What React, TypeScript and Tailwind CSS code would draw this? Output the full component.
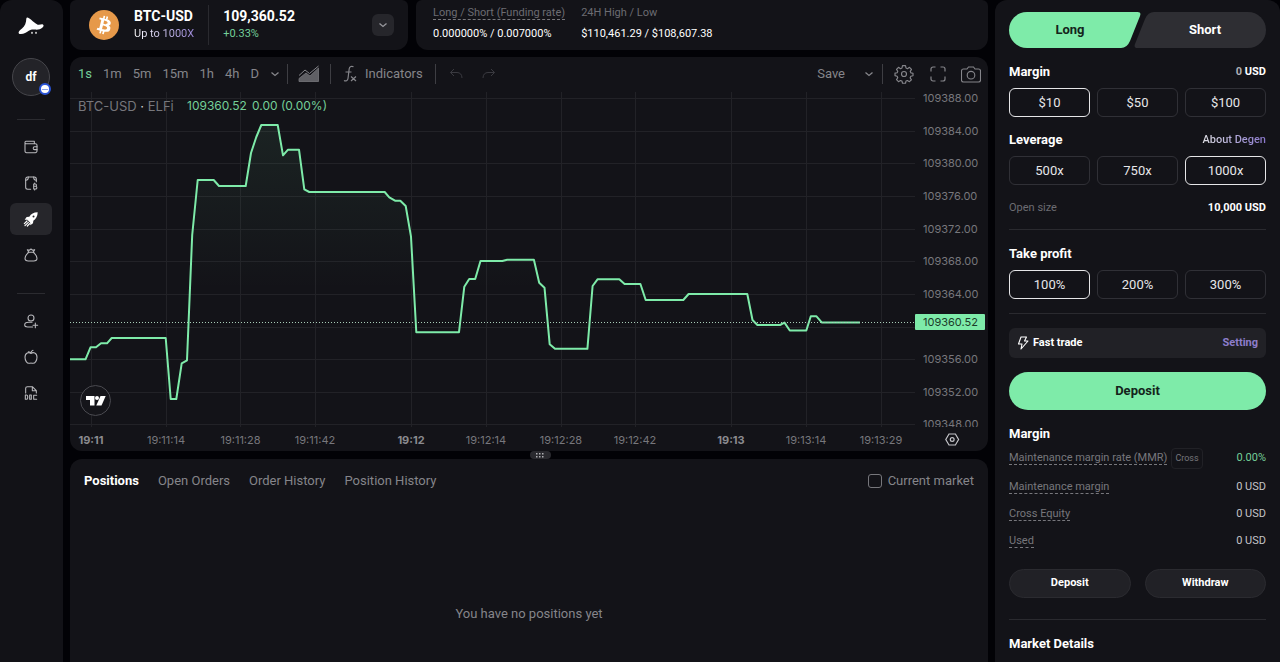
import { useState, type ReactNode } from "react";

const GREEN = "#7eeba9";

const PRICE_LINE =
  "70,359.3 85.5,359.3 90.5,347.3 96,347.3 101,343.3 107,343.3 111.7,338 165.7,338 170.7,399 176.3,399 181.7,363.3 187,360.3 192.2,235 197.7,180 213.7,180 219,186 245.7,186 251,153 256.3,137 261.3,125 277.7,125 283,155.3 288,149.7 299,149.7 304.3,189.3 309.3,192 384.7,192 389.3,197.3 395,200.7 400.3,200.7 405.7,206 411,236.7 416.3,332.2 459,332.2 464.3,286.7 469.2,279 475.2,279 480.5,261 502.3,261 507.2,259.8 533.9,259.8 539.2,282.7 544.5,287.7 549.7,344.3 555,348.8 587.4,348.8 592.6,286 597.5,279.3 619.3,279.3 624.6,284 640.4,284 645.7,300 683.3,300 688.6,294 747.3,294 752.5,320 757.4,325 780,325 784.5,322.6 789.8,330.5 806.3,330.5 810.8,316.3 816.5,316.3 821.7,322.4 860,322.4";

const PRICES = [
  { label: "109388.00", y: 98 },
  { label: "109384.00", y: 131 },
  { label: "109380.00", y: 163 },
  { label: "109376.00", y: 196 },
  { label: "109372.00", y: 229 },
  { label: "109368.00", y: 261 },
  { label: "109364.00", y: 294 },
  { label: "", y: 327 },
  { label: "109356.00", y: 359 },
  { label: "109352.00", y: 392 },
  { label: "109348.00", y: 424 },
];

const TIMES = [
  { label: "19:11", x: 91, major: true },
  { label: "19:11:14", x: 166 },
  { label: "19:11:28", x: 240.5 },
  { label: "19:11:42", x: 315 },
  { label: "19:12", x: 411, major: true },
  { label: "19:12:14", x: 486 },
  { label: "19:12:28", x: 561 },
  { label: "19:12:42", x: 635 },
  { label: "19:13", x: 731, major: true },
  { label: "19:13:14", x: 806 },
  { label: "19:13:29", x: 881 },
];

function Icon({ children, className = "size-4" }: { children: ReactNode; className?: string }) {
  return (
    <svg
      viewBox="0 0 24 24"
      fill="none"
      stroke="currentColor"
      strokeWidth="1.6"
      strokeLinecap="round"
      strokeLinejoin="round"
      className={className}
      aria-hidden="true"
    >
      {children}
    </svg>
  );
}

const Chevron = () => (
  <svg viewBox="0 0 10 10" fill="none" stroke="currentColor" strokeWidth="1.3" className="size-[10px]" aria-hidden="true">
    <path d="M1.5 3.5 5 6.5l3.5-3" />
  </svg>
);

const NAV_TOP = [
  {
    name: "Wallet",
    icon: (
      <Icon>
        <path d="M3 5.500v12A2.500 2.500 0 0 0 5.500 20.500h13a2.500 2.500 0 0 0 2.500-2.500v-8.500A2.500 2.500 0 0 0 18.500 7H4.500A1.500 1.500 0 0 1 3 5.500 1.500 1.500 0 0 1 4.500 3.500H17V7" />
        <path d="M21 11.500h-3.500a2.200 2.200 0 0 0 0 4.400H21" />
      </Icon>
    ),
  },
  {
    name: "Crypto",
    icon: (
      <Icon>
        <path d="M11.500 21.500H7a3 3 0 0 1-3-3V6.500C4 4.500 5.200 3 7 3h10c1.800 0 3 1.500 3 3.500v3.500" />
        <path d="M4 8c2.500 0 4-1.700 4-5M16 3c0 3 1.500 5 4 5" />
        <path d="M16 13.500v7.500h2.800a2 2 0 0 0 0-4H16m2.500 0a1.750 1.750 0 0 0 0-3.500H16M17.500 12v1.500M17.500 21v1.500" />
      </Icon>
    ),
  },
  {
    name: "Degen",
    icon: (
      <svg viewBox="0 0 24 24" fill="currentColor" className="size-4" aria-hidden="true">
        <path
          fillRule="evenodd"
          d="M22 2c-6 0-10 2.500-12.500 6.500L5.500 9 2.500 13l4 .3 4.200 4.200.3 4 4-3 .5-4C19.500 12 22 8 22 2Zm-6.200 4.700a1.500 1.500 0 1 1 0 3 1.500 1.500 0 0 1 0-3Z"
        />
        <path d="M6 15 2 19M8 17l-5 5M10 19l-3.500 3.500" stroke="currentColor" strokeWidth="1.800" strokeLinecap="round" />
      </svg>
    ),
  },
  {
    name: "Earn",
    icon: (
      <Icon>
        <path d="M8.500 8C5 11 3 14 3 17c0 2.500 2 4 5 4h8c3 0 5-1.500 5-4 0-3-2-6-5.500-9" />
        <path d="M7.500 8h9M8.500 7.500 6.500 4 9.500 4.800 12 3l2.500 1.800 3-.8-2 3.500" />
      </Icon>
    ),
  },
];

const NAV_BOTTOM = [
  {
    name: "Referral",
    icon: (
      <Icon>
        <circle cx="12" cy="7.500" r="4.500" />
        <path d="M13.500 14H8.500C5 14 2.500 15.500 2.500 18S4.500 21 7 21h7.500M18.500 15v7M15 18.500h7" />
      </Icon>
    ),
  },
  {
    name: "Farm",
    icon: (
      <Icon>
        <path d="M12 6.500C9 4.500 3 5 3 12.500c0 5 3 9 6 9 1.500 0 2-.5 3-.5s1.500.5 3 .5c3 0 6-4 6-9C21 5 15 4.500 12 6.500Z" />
        <path d="M12 6.500C12 4 13 2.500 15 2M8 4c2 0 3.500.8 4 2.500" />
      </Icon>
    ),
  },
  {
    name: "Docs",
    icon: (
      <Icon>
        <path d="M4 12V5a2.500 2.500 0 0 1 2.500-2.500H14L20 8.500V12M14 2.500v6h6" />
        <path d="M3.500 15v6.500h1.500a2 2 0 0 0 2-2v-2.500a2 2 0 0 0-2-2ZM10 15h2.500v6.500H10ZM20.500 15.500h-4.500V21.500h4.500" />
      </Icon>
    ),
  },
];

function NavButton({ name, icon, active = false }: { name: string; icon: ReactNode; active?: boolean }) {
  return (
    <button
      type="button"
      aria-label={name}
      className={`flex h-8 w-[42px] items-center justify-center rounded-md ${
        active ? "bg-[#26262b] text-white" : "text-[#b9b9bd]"
      }`}
    >
      {icon}
    </button>
  );
}

function Sidebar() {
  return (
    <nav className="flex w-[63px] shrink-0 flex-col items-center rounded-t-xl bg-[#121217] pt-4 pr-px">
      <a href="#home" aria-label="Home" className="flex h-5 items-center">
        <svg viewBox="0 0 26 18" className="h-[18px] w-[26px]" fill="#fff" aria-hidden="true">
          <path d="M11 1.200C9.500.2 8.400.5 8.300 1.700 8.200 5.500 7 9 4 11.500 2.200 13 .8 14 .6 15.500c-.1 1.300 1 1.700 2.300 1.600C6 17 8.300 15.800 10.800 13.800c1.900-1.400 4.200-1.600 6.200-1.200 2.500.5 5.500-.3 7.500-2.100 1.200-1.100 1.500-2.600.3-3.100-1-.4-2.300.3-4 .4C18.500 7.900 14 3.200 11 1.200Z" />
          <path d="m13 16 1-1.500L15 16l-1 1Zm4 0 1-1.500L19 16l-1 1Z" />
        </svg>
      </a>
      <button
        type="button"
        className="relative mt-[22px] flex size-[38px] items-center justify-center rounded-full border border-[#46464b] bg-[#232328] text-xs font-bold text-white"
      >
        df
        <span className="absolute -right-[2px] bottom-0 flex size-3 items-center justify-center rounded-full border-2 border-[#2a54d6] bg-white">
          <span className="h-px w-1.5 bg-[#8ea5ea]" />
        </span>
      </button>
      <hr className="mt-[23px] w-7 border-[#2b2b30]" />
      <div className="mt-[11px] flex flex-col gap-1">
        {NAV_TOP.map((n) => (
          <NavButton key={n.name} {...n} active={n.name === "Degen"} />
        ))}
      </div>
      <hr className="mt-[22px] w-7 border-[#2b2b30]" />
      <div className="mt-[11px] flex flex-col gap-1">
        {NAV_BOTTOM.map((n) => (
          <NavButton key={n.name} {...n} />
        ))}
      </div>
    </nav>
  );
}

function Header() {
  return (
    <header className="flex h-[50px] gap-2">
      <section className="flex w-[338px] shrink-0 items-center rounded-t-md rounded-b-xl bg-[#131318] pl-[19px] pr-[14px]">
        <svg viewBox="0 0 32 32" className="size-[30px]" aria-hidden="true">
          <circle cx="16" cy="16" r="16" fill="#e6994a" />
          <path
            fill="#fff"
            d="M23.189 14.020c.314-2.096-1.283-3.223-3.465-3.975l.708-2.840-1.728-.43-.69 2.765c-.454-.114-.92-.22-1.385-.326l.695-2.783L15.596 6l-.708 2.839c-.376-.086-.746-.17-1.104-.26l.002-.009-2.384-.595-.46 1.846s1.283.294 1.256.312c.7.175.826.638.805 1.006l-.806 3.235c.048.012.110.030.180.057l-.183-.045-1.130 4.532c-.086.212-.303.531-.793.410.018.025-1.256-.313-1.256-.313l-.858 1.978 2.250.561c.418.105.828.215 1.231.318l-.715 2.872 1.727.430.708-2.840c.472.127.930.245 1.378.357l-.706 2.828 1.728.430.715-2.866c2.948.558 5.164.333 6.097-2.333.752-2.146-.037-3.385-1.588-4.192 1.130-.260 1.980-1.003 2.207-2.538zm-3.950 5.538c-.533 2.147-4.148.986-5.320.695l.950-3.805c1.172.293 4.929.872 4.370 3.110zm.535-5.569c-.487 1.953-3.495.960-4.470.717l.860-3.450c.975.243 4.118.696 3.610 2.733z"
          />
        </svg>
        <div className="ml-[15px]">
          <h1 className="text-sm leading-[18px] font-bold text-white">BTC-USD</h1>
          <p className="bg-linear-to-r from-white to-[#9a86d6] bg-clip-text text-[11px] leading-[18px] text-transparent">
            Up to 1000X
          </p>
        </div>
        <div className="ml-[14px] h-10 w-px bg-[#2a2a2f]" />
        <div className="ml-[14px]">
          <p className="text-sm leading-[18px] font-bold text-white">109,360.52</p>
          <p className="text-[11px] leading-[18px] text-[#74cf98]">+0.33%</p>
        </div>
        <button
          type="button"
          aria-label="Select market"
          className="ml-auto flex size-[22px] items-center justify-center rounded-md bg-[#26262b] text-[#98989d]"
        >
          <Chevron />
        </button>
      </section>
      <section className="flex flex-1 gap-4 rounded-t-md rounded-b-xl bg-[#131318] pt-[6px] pl-[17px] text-[11px]">
        <div className="flex flex-col items-start gap-[5px]">
          <span className="border-b border-dashed border-[#77777c] leading-[13px] text-[#6c6c72]">
            Long / Short (Funding rate)
          </span>
          <span className="leading-[18px] text-white">0.000000% / 0.007000%</span>
        </div>
        <div className="flex flex-col items-start gap-[6px]">
          <span className="leading-[13px] text-[#6c6c72]">24H High / Low</span>
          <span className="leading-[18px] text-white">$110,461.29 / $108,607.38</span>
        </div>
      </section>
    </header>
  );
}

const Separator = () => <div className="h-5 w-px bg-[#3e3e43]" />;

function Toolbar() {
  return (
    <div className="flex h-[34px] items-center pr-[7px] pl-2 text-[13px] text-[#85858a]">
      <div className="flex items-center gap-[11px]">
        {["1s", "1m", "5m", "15m", "1h", "4h", "D"].map((t) => (
          <button key={t} type="button" className={t === "1s" ? "text-[#74cf98]" : ""}>
            {t}
          </button>
        ))}
        <button type="button" aria-label="More intervals">
          <Chevron />
        </button>
      </div>
      <div className="ml-[7px] flex items-center gap-[10px]">
        <Separator />
        <button type="button" aria-label="Chart type">
          <svg viewBox="0 0 22 18" className="h-[18px] w-[22px]" aria-hidden="true">
            <path d="M1 16.500v-3l7-5.500 4 3 8.500-8v13.500Z" fill="#606065" />
            <path d="m1 10.500 6-5.500 4.500 3.500L20.500 1" fill="none" stroke="#85858a" />
            <path d="M1 16.500v-3l7-5.500 4 3 8.500-8v13.500Z" fill="none" stroke="#77777c" strokeWidth=".8" />
          </svg>
        </button>
        <Separator />
      </div>
      <button type="button" className="ml-3 flex items-center gap-2">
        <svg viewBox="0 0 14 18" className="h-[18px] w-[14px]" fill="none" stroke="currentColor" strokeWidth="1.200" aria-hidden="true">
          <path d="M10.500 1.800C8.800.8 6.500 1.300 6.200 3.700L5 13.500c-.3 2.300-2.300 3-4 2M2.500 7h6M8 11.500l5 4.500M13 11.500 8 16" />
        </svg>
        Indicators
      </button>
      <div className="ml-3">
        <Separator />
      </div>
      <div className="ml-[13px] flex items-center gap-[19px] text-[#3a3a40]">
        <button type="button" aria-label="Undo">
          <svg viewBox="0 0 14 12" className="h-3 w-[14px]" fill="none" stroke="currentColor" aria-hidden="true">
            <path d="M5 1 1.500 4.500 5 8M1.500 4.500H8C11 4.500 13 6.500 13 10" />
          </svg>
        </button>
        <button type="button" aria-label="Redo">
          <svg viewBox="0 0 14 12" className="h-3 w-[14px]" fill="none" stroke="currentColor" aria-hidden="true">
            <path d="m9 1 3.500 3.500L9 8M12.500 4.500H6C3 4.500 1 6.500 1 10" />
          </svg>
        </button>
      </div>
      <button type="button" className="ml-auto">
        Save
      </button>
      <button type="button" aria-label="Save options" className="ml-[19px]">
        <Chevron />
      </button>
      <div className="ml-2">
        <Separator />
      </div>
      <button type="button" aria-label="Settings" className="ml-[11px]">
        <svg viewBox="0 0 24 24" className="size-5" fill="none" stroke="currentColor" strokeWidth="1.400" strokeLinejoin="round" aria-hidden="true">
          <circle cx="12" cy="12" r="3" />
          <path d="M10.200 2h3.600l.6 2.800 1.800.8L18.600 4 21 6.500l-1.500 2.400.7 1.700 2.600.5v3l-2.600.6-.8 1.900 1.500 2.300-2.400 2.300-2.400-1.400-1.700.7-.6 2.600h-3.600l-.6-2.600-1.800-.7-2.400 1.400L3 18.800l1.500-2.300-.7-1.800L1.200 14v-3l2.600-.5.7-1.800L3 6.400 5.400 4l2.400 1.600 1.800-.8Z" />
        </svg>
      </button>
      <button type="button" aria-label="Fullscreen" className="ml-[16px]">
        <svg viewBox="0 0 16 16" className="size-4" fill="none" stroke="currentColor" strokeWidth="1.200" aria-hidden="true">
          <path d="M1 5.500V3a2 2 0 0 1 2-2h2.500M10.500 1H13a2 2 0 0 1 2 2v2.500M15 10.500V13a2 2 0 0 1-2 2h-2.500M5.500 15H3a2 2 0 0 1-2-2v-2.500" />
        </svg>
      </button>
      <button type="button" aria-label="Snapshot" className="ml-[15px]">
        <svg viewBox="0 0 20 17" className="h-[17px] w-5" fill="none" stroke="currentColor" strokeWidth="1.100" aria-hidden="true">
          <path d="M2.500 3H6l1.500-2h5L14 3h3.500a2 2 0 0 1 2 2v9a2 2 0 0 1-2 2h-15a2 2 0 0 1-2-2V5a2 2 0 0 1 2-2Z" />
          <circle cx="10" cy="9.200" r="3.800" />
        </svg>
      </button>
    </div>
  );
}

function PriceChart() {
  return (
    <svg viewBox="70 91 918 360" className="block h-auto w-full font-[Inter,sans-serif]" role="img" aria-label="BTC-USD price chart">
      <defs>
        <linearGradient id="area" x1="0" y1="91" x2="0" y2="290" gradientUnits="userSpaceOnUse">
          <stop offset="0" stopColor={GREEN} stopOpacity=".09" />
          <stop offset="1" stopColor={GREEN} stopOpacity="0" />
        </linearGradient>
        <clipPath id="axis">
          <rect x="915" y="91" width="73" height="336" />
        </clipPath>
      </defs>
      <g stroke="#222227" shapeRendering="crispEdges">
        {PRICES.map((p) => (
          <line key={p.y} x1="70" x2="915" y1={p.y} y2={p.y} />
        ))}
        {TIMES.map((t) => (
          <line key={t.x} x1={t.x} x2={t.x} y1="92" y2="427" />
        ))}
      </g>
      <polygon points={`${PRICE_LINE} 860,427 70,427`} fill="url(#area)" />
      <polyline points={PRICE_LINE} fill="none" stroke={GREEN} strokeWidth="2" strokeLinejoin="round" />
      <line x1="70" x2="915" y1="322.500" y2="322.500" stroke="#a9cdb8" strokeDasharray="1 2" />
      <text x="78" y="111" fontSize="13" fill="#77777c">
        BTC-USD <tspan fill="#d0d0d4">·</tspan> ELFi
      </text>
      <text x="187" y="110" fontSize="12" fill="#74cf98">
        109360.52
      </text>
      <text x="252" y="110" fontSize="12" fill="#74cf98">
        0.00 (0.00%)
      </text>
      <g fontSize="11" fill="#77777c" clipPath="url(#axis)">
        {PRICES.map((p) => (
          <text key={p.y} x="923" y={p.y + 4}>
            {p.label}
          </text>
        ))}
      </g>
      <rect x="915" y="314" width="70" height="16" rx="1" fill={GREEN} />
      <text x="923" y="326" fontSize="11" fill="#1c3a29">
        109360.52
      </text>
      <g fontSize="11" textAnchor="middle" fill="#77777c">
        {TIMES.map((t) => (
          <text key={t.x} x={t.x} y="444" fontWeight={t.major ? 700 : 400} fill={t.major ? "#8a8a8f" : undefined}>
            {t.label}
          </text>
        ))}
      </g>
      <circle cx="95.500" cy="400.500" r="15" fill="#15151a" stroke="#4a4a50" />
      <g fill="#fff">
        <path d="M86 396h8.500v9.500H90v-5.500h-4Z" />
        <circle cx="97" cy="398" r="2" />
        <path d="M100.500 396h5.200l-4.200 9.500h-5.200Z" />
      </g>
      <g fill="none" stroke="#c4c4c8" strokeWidth="1.200">
        <path d="M949 434h6.400l3.200 5.500-3.200 5.500H949l-3.200-5.500Z" />
        <circle cx="952.200" cy="439.500" r="1.900" />
      </g>
    </svg>
  );
}

const POSITION_TABS = ["Positions", "Open Orders", "Order History", "Position History"];

function Positions() {
  const [tab, setTab] = useState(POSITION_TABS[0]);
  return (
    <section className="flex flex-1 flex-col rounded-t-xl bg-[#131318] px-[14px] pt-[11px] pb-[37px] text-[13px] text-[#85858a]">
      <div className="flex h-[22px] items-center gap-[19px]">
        {POSITION_TABS.map((t) => (
          <button key={t} type="button" onClick={() => setTab(t)} className={t === tab ? "font-bold text-white" : ""}>
            {t}
          </button>
        ))}
        <label className="ml-auto flex items-center gap-[6px]">
          <input type="checkbox" className="size-[14px] appearance-none rounded-[3px] border border-[#77777c] checked:bg-[#7eeba9]" />
          Current market
        </label>
      </div>
      <p className="mt-auto text-center leading-[22px]">You have no positions yet</p>
    </section>
  );
}

function SideTab({ label, long }: { label: string; long?: boolean }) {
  return (
    <button
      type="button"
      className={`relative isolate h-9 flex-1 text-[13px] font-bold ${
        long ? "pr-[10px] text-[#14241b]" : "-ml-[7px] pl-[10px] text-white"
      }`}
    >
      <svg
        viewBox="0 0 132 36"
        preserveAspectRatio="none"
        className={`absolute inset-0 -z-10 size-full ${long ? "text-[#7eeba9]" : "rotate-180 text-[#2e2e33]"}`}
        aria-hidden="true"
      >
        <path d="M18 0H128.500Q132.500 0 131 4L121 29Q118 36 112 36H18A18 18 0 0 1 18 0Z" fill="currentColor" />
      </svg>
      {label}
    </button>
  );
}

function Choices({ name, options, initial }: { name: string; options: string[]; initial: string }) {
  const [value, setValue] = useState(initial);
  return (
    <div role="group" aria-label={name} className="mt-[5px] grid grid-cols-3 gap-[7px]">
      {options.map((o) => (
        <button
          key={o}
          type="button"
          aria-pressed={o === value}
          onClick={() => setValue(o)}
          className={`h-[29px] rounded-md border text-[13px] text-[#e6e6e8] ${
            o === value ? "border-[#e6e6e8]" : "border-[#303036]"
          }`}
        >
          {o}
        </button>
      ))}
    </div>
  );
}

function Row({ children, className }: { children: ReactNode; className: string }) {
  return <div className={`flex items-center justify-between ${className}`}>{children}</div>;
}

const Term = ({ children }: { children: ReactNode }) => (
  <span className="border-b border-dashed border-[#77777c] leading-[12px] text-[#77777c]">{children}</span>
);

const Heading = ({ children }: { children: ReactNode }) => (
  <h2 className="text-[13px] font-bold text-white">{children}</h2>
);

function TradePanel() {
  return (
    <aside className="w-[285px] shrink-0 rounded-t-xl bg-[#131318] px-[14px] pt-3 text-[11px]">
      <div className="flex">
        <SideTab label="Long" long />
        <SideTab label="Short" />
      </div>
      <Row className="mt-[13px] h-[22px]">
        <Heading>Margin</Heading>
        <span className="font-bold text-white">
          <span className="text-[#b0b0b4]">0</span> USD
        </span>
      </Row>
      <Choices name="Margin" options={["$10", "$50", "$100"]} initial="$10" />
      <Row className="mt-3 h-[22px]">
        <Heading>Leverage</Heading>
        <a href="#degen" className="bg-linear-to-r from-[#e0e0e4] to-[#8a76cc] bg-clip-text font-medium text-transparent">
          About Degen
        </a>
      </Row>
      <Choices name="Leverage" options={["500x", "750x", "1000x"]} initial="1000x" />
      <Row className="mt-3 h-[22px]">
        <span className="text-[#6c6c72]">Open size</span>
        <span className="font-bold text-white">10,000 USD</span>
      </Row>
      <hr className="mt-[10px] border-[#2a2a2f]" />
      <Row className="mt-[13px] h-[22px]">
        <Heading>Take profit</Heading>
      </Row>
      <Choices name="Take profit" options={["100%", "200%", "300%"]} initial="100%" />
      <hr className="mt-3.5 border-[#2a2a2f]" />
      <Row className="mt-3.5 h-[30px] rounded-md bg-[#212126] px-2">
        <span className="flex items-center gap-1 font-bold text-white">
          <svg viewBox="0 0 12 14" className="h-[14px] w-3" fill="none" stroke="currentColor" strokeWidth="1.100" strokeLinejoin="round" aria-hidden="true">
            <path d="M4 1h5.500L7.500 5H11L4 13l1-5H1.500Z" />
          </svg>
          Fast trade
        </span>
        <button type="button" className="font-bold text-[#8d7dcb]">
          Setting
        </button>
      </Row>
      <button type="button" className="mt-3.5 h-[38px] w-full rounded-full bg-[#7eeba9] text-[13px] font-bold text-[#14241b]">
        Deposit
      </button>
      <Row className="mt-[13px] h-[22px]">
        <Heading>Margin</Heading>
      </Row>
      <Row className="mt-[3px] h-[21px]">
        <span className="flex items-center gap-1">
          <Term>Maintenance margin rate (MMR)</Term>
          <span className="rounded-sm border border-[#212126] px-[3px] text-[9px] leading-[19px] text-[#77777c]">Cross</span>
        </span>
        <span className="text-[#74cf98]">0.00%</span>
      </Row>
      <div className="mt-2 flex flex-col gap-1.5 text-[#c4c4c8]">
        {["Maintenance margin", "Cross Equity", "Used"].map((t) => (
          <Row key={t} className="h-[21px]">
            <Term>{t}</Term>
            <span>0 USD</span>
          </Row>
        ))}
      </div>
      <div className="mt-[17px] grid grid-cols-2 gap-[14px]">
        {["Deposit", "Withdraw"].map((t) => (
          <button key={t} type="button" className="h-[29px] rounded-full border border-[#2b2b30] bg-[#212126] font-bold text-white">
            {t}
          </button>
        ))}
      </div>
      <hr className="mt-[21px] border-[#2a2a2f]" />
      <Row className="mt-[13px] h-[22px]">
        <Heading>Market Details</Heading>
      </Row>
    </aside>
  );
}

export default function App() {
  return (
    <div className="flex min-h-screen gap-[7px] bg-[#020206] font-[Roboto,sans-serif]">
      <Sidebar />
      <main className="flex min-w-0 flex-1 flex-col">
        <Header />
        <section className="mt-[7px] overflow-hidden rounded-xl bg-[#131318]">
          <Toolbar />
          <PriceChart />
        </section>
        <div className="flex h-2 justify-center pl-[22px]">
          <div className="flex h-2 w-[21px] items-center justify-center rounded-sm bg-[#2a2a2f]">
            <svg viewBox="0 0 8 5" className="h-[5px] w-2" fill="#b0b0b4" aria-hidden="true">
              <path d="M0 0h1.500v1.500H0zM3 0h1.500v1.500H3zM6 0h1.500v1.500H6zM0 3h1.500v1.500H0zM3 3h1.500v1.500H3zM6 3h1.500v1.500H6z" />
            </svg>
          </div>
        </div>
        <Positions />
      </main>
      <TradePanel />
    </div>
  );
}
